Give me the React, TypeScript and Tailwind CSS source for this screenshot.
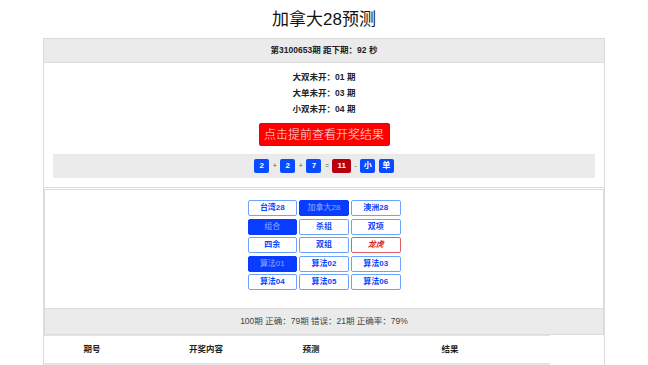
const font = { fontFamily: '"Liberation Sans", "Noto Sans CJK SC", sans-serif' };

const stats = [
  { label: "大双未开", n: "01" },
  { label: "大单未开", n: "03" },
  { label: "小双未开", n: "04" },
];

const tabs = [
  { t: "台湾28" },
  { t: "加拿大28", on: true },
  { t: "澳洲28" },
  { t: "组合", on: true },
  { t: "杀组" },
  { t: "双项" },
  { t: "四余" },
  { t: "双组" },
  { t: "龙虎", red: true },
  { t: "算法01", on: true },
  { t: "算法02" },
  { t: "算法03" },
  { t: "算法04" },
  { t: "算法05" },
  { t: "算法06" },
];

function Badge({ v, red }: { v: string; red?: boolean }) {
  return (
    <span
      className={`inline-flex h-[14px] min-w-[15px] items-center justify-center rounded-[2px] px-[3px] text-[8px] font-bold text-white ${
        red ? "bg-[#b8000f] px-[5px]" : "bg-[#0a4bff]"
      }`}
    >
      {v}
    </span>
  );
}

export default function App() {
  return (
    <div className="min-h-[365px] bg-white text-[#222]" style={font}>
      <h1 className="pt-[9px] text-center text-[17px] leading-[22px] text-[#111]">加拿大28预测</h1>

      <div className="mx-auto mt-[7px] w-[562px] border border-[#dcdcdc]">
        {/* period header */}
        <div className="flex h-[24px] items-center justify-center border-b border-[#dcdcdc] bg-[#ebebeb] text-[8.5px] font-bold">
          第3100653期 距下期：92 秒
        </div>

        <div className="border-b border-[#dcdcdc] pb-[9px] pt-[6px]">
          {stats.map((s) => (
            <div key={s.label} className="text-center text-[8.5px] font-bold leading-[16px]">
              {s.label}：{s.n} 期
            </div>
          ))}
          <div className="mt-[6px] flex justify-center">
            <button className="h-[23px] w-[131px] whitespace-nowrap rounded-[2px] border border-[#3a3f9a] bg-[#ff0000] text-[12px] font-light text-[#ffe4e4]">
              点击提前查看开奖结果
            </button>
          </div>
          <div className="mx-[9px] mt-[8px] flex h-[24px] items-center justify-center gap-[3.5px] bg-[#ebebeb] text-[7px] text-[#555]">
            <Badge v="2" />
            <span>+</span>
            <Badge v="2" />
            <span>+</span>
            <Badge v="7" />
            <span>=</span>
            <Badge v="11" red />
            <span>-</span>
            <Badge v="小" />
            <Badge v="单" />
          </div>
        </div>

        <div className="mt-[1px] border border-[#dcdcdc]">
          <div className="flex justify-center pb-[18px] pt-[10px]">
            <div className="grid w-[153px] grid-cols-3 gap-x-[2px] gap-y-[2.5px]">
              {tabs.map((b) => (
                <div
                  key={b.t}
                  className={`flex h-[16px] items-center justify-center rounded-[2px] border text-[8px] font-bold ${
                    b.on
                      ? "border-[#0a3cff] bg-[#0a3cff] font-normal text-[#8fa8ff]"
                      : b.red
                      ? "border-[#e06060] bg-white italic text-[#d8202a]"
                      : "border-[#6aa4ff] bg-white text-[#0a46ff]"
                  }`}
                >
                  {b.t}
                </div>
              ))}
            </div>
          </div>
          <div className="flex h-[26px] items-center justify-center border-t border-[#dcdcdc] bg-[#ebebeb] text-[8.5px] text-[#444]">
            100期 正确：79期 错误：21期 正确率：79%
          </div>
        </div>

        <div className="w-[506px] border-t border-[#e4e4e4]">
          <div className="grid h-[27px] grid-cols-[96px_132px_78px_200px] items-center text-center text-[8.5px] font-bold">
            <span>期号</span>
            <span>开奖内容</span>
            <span>预测</span>
            <span>结果</span>
          </div>
          <div className="h-[4px] bg-[#e4e4e4]" />
        </div>
      </div>
    </div>
  );
}
